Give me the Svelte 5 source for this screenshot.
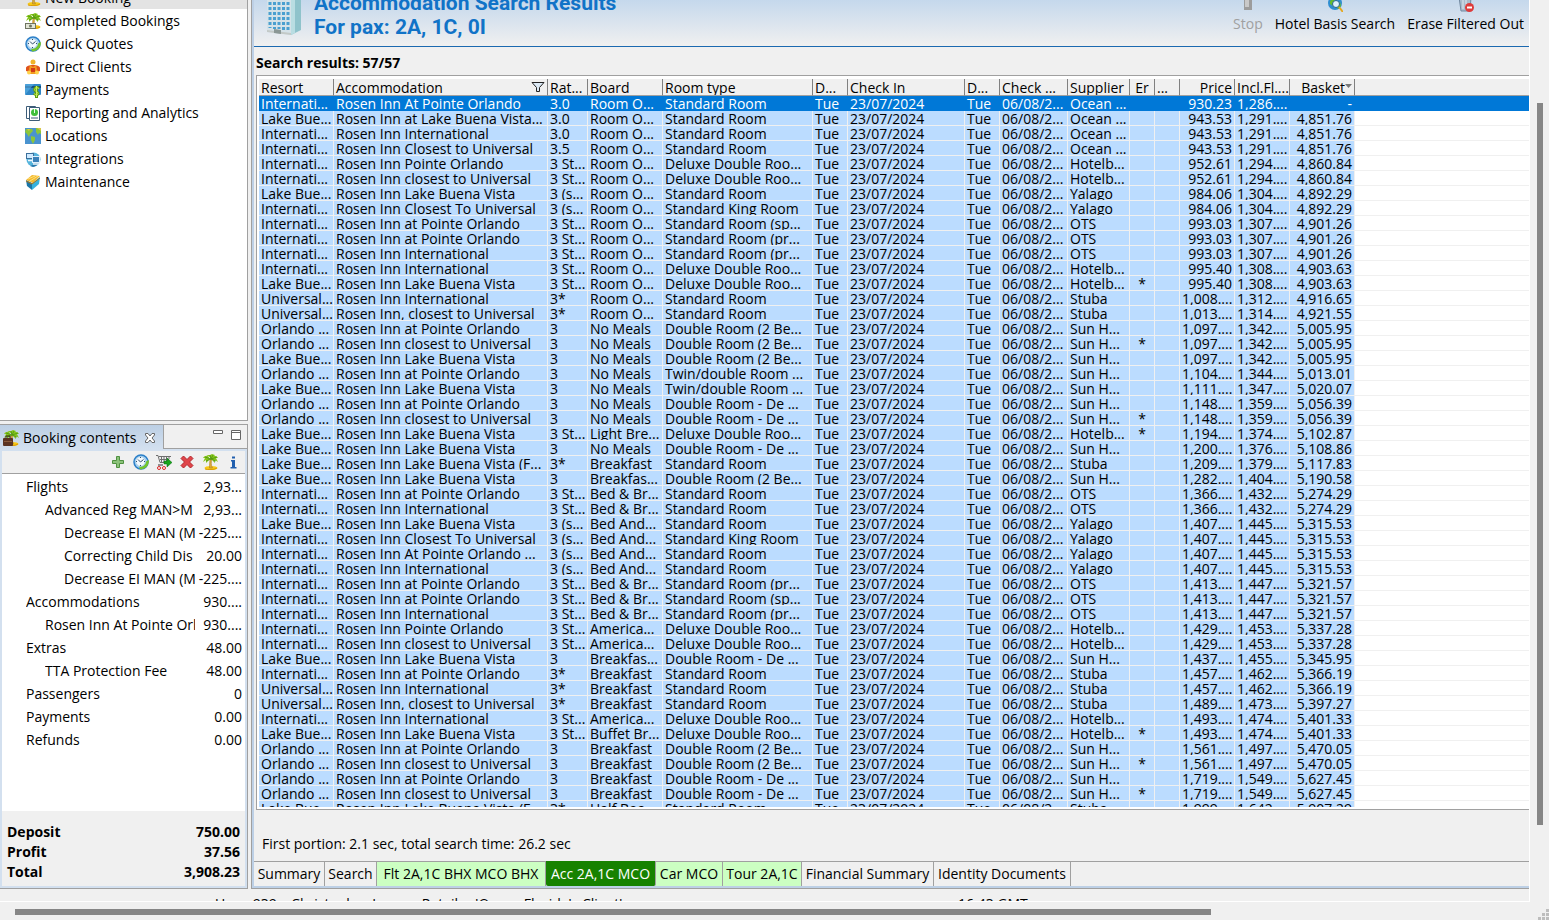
<script>
	const navItems = [
		{ label: 'Completed Bookings', icon: 'palmcash' },
		{ label: 'Quick Quotes', icon: 'clock' },
		{ label: 'Direct Clients', icon: 'client' },
		{ label: 'Payments', icon: 'payment' },
		{ label: 'Reporting and Analytics', icon: 'report' },
		{ label: 'Locations', icon: 'map' },
		{ label: 'Integrations', icon: 'network' },
		{ label: 'Maintenance', icon: 'tools' }
	];

	const tools = [
		{ label: 'Add', icon: 'plus' },
		{ label: 'Quick quote', icon: 'clock' },
		{ label: 'Checkout', icon: 'cart' },
		{ label: 'Remove', icon: 'cross' },
		{ label: 'Holiday', icon: 'palm' },
		{ label: 'Info', icon: 'info' }
	];

	const contents = [
		[0, 'Flights', '2,93...'],
		[1, 'Advanced Reg MAN>M', '2,93...'],
		[2, 'Decrease EI MAN (M', '-225....'],
		[2, 'Correcting Child Dis', '20.00'],
		[2, 'Decrease EI MAN (M', '-225....'],
		[0, 'Accommodations', '930....'],
		[1, 'Rosen Inn At Pointe Orl', '930....'],
		[0, 'Extras', '48.00'],
		[1, 'TTA Protection Fee', '48.00'],
		[0, 'Passengers', '0'],
		[0, 'Payments', '0.00'],
		[0, 'Refunds', '0.00']
	];

	const totals = [
		['Deposit', '750.00'],
		['Profit', '37.56'],
		['Total', '3,908.23']
	];

	const columns = [
		{ label: 'Resort', width: 75 },
		{ label: 'Accommodation', width: 214, filter: true },
		{ label: 'Rat...', width: 40 },
		{ label: 'Board', width: 75 },
		{ label: 'Room type', width: 150 },
		{ label: 'D...', width: 35 },
		{ label: 'Check In', width: 117 },
		{ label: 'D...', width: 35 },
		{ label: 'Check ...', width: 68 },
		{ label: 'Supplier', width: 62 },
		{ label: 'Er', width: 25, align: 'center' },
		{ label: '...', width: 25 },
		{ label: 'Price', width: 55, align: 'right' },
		{ label: 'Incl.Fl....', width: 55, align: 'right' },
		{ label: 'Basket', width: 65, align: 'right', sorted: true }
	];

	// resort | accommodation | rating | board | room | supplier | error | price | incl. flight | basket
	const data = `
Internati...|Rosen Inn At Pointe Orlando|3.0|Room O...|Standard Room|Ocean ...||930.23|1,286....|-
Lake Bue...|Rosen Inn at Lake Buena Vista...|3.0|Room O...|Standard Room|Ocean ...||943.53|1,291....|4,851.76
Internati...|Rosen Inn International|3.0|Room O...|Standard Room|Ocean ...||943.53|1,291....|4,851.76
Internati...|Rosen Inn Closest to Universal|3.5|Room O...|Standard Room|Ocean ...||943.53|1,291....|4,851.76
Internati...|Rosen Inn Pointe Orlando|3 St...|Room O...|Deluxe Double Roo...|Hotelb...||952.61|1,294....|4,860.84
Internati...|Rosen Inn closest to Universal|3 St...|Room O...|Deluxe Double Roo...|Hotelb...||952.61|1,294....|4,860.84
Lake Bue...|Rosen Inn Lake Buena Vista|3 (s...|Room O...|Standard Room|Yalago||984.06|1,304....|4,892.29
Internati...|Rosen Inn Closest To Universal|3 (s...|Room O...|Standard King Room|Yalago||984.06|1,304....|4,892.29
Internati...|Rosen Inn at Pointe Orlando|3 St...|Room O...|Standard Room (sp...|OTS||993.03|1,307....|4,901.26
Internati...|Rosen Inn at Pointe Orlando|3 St...|Room O...|Standard Room (pr...|OTS||993.03|1,307....|4,901.26
Internati...|Rosen Inn International|3 St...|Room O...|Standard Room (pr...|OTS||993.03|1,307....|4,901.26
Internati...|Rosen Inn International|3 St...|Room O...|Deluxe Double Roo...|Hotelb...||995.40|1,308....|4,903.63
Lake Bue...|Rosen Inn Lake Buena Vista|3 St...|Room O...|Deluxe Double Roo...|Hotelb...|*|995.40|1,308....|4,903.63
Universal...|Rosen Inn International|3*|Room O...|Standard Room|Stuba||1,008....|1,312....|4,916.65
Universal...|Rosen Inn, closest to Universal|3*|Room O...|Standard Room|Stuba||1,013....|1,314....|4,921.55
Orlando ...|Rosen Inn at Pointe Orlando|3|No Meals|Double Room (2 Be...|Sun H...||1,097....|1,342....|5,005.95
Orlando ...|Rosen Inn closest to Universal|3|No Meals|Double Room (2 Be...|Sun H...|*|1,097....|1,342....|5,005.95
Lake Bue...|Rosen Inn Lake Buena Vista|3|No Meals|Double Room (2 Be...|Sun H...||1,097....|1,342....|5,005.95
Orlando ...|Rosen Inn at Pointe Orlando|3|No Meals|Twin/double Room ...|Sun H...||1,104....|1,344....|5,013.01
Lake Bue...|Rosen Inn Lake Buena Vista|3|No Meals|Twin/double Room ...|Sun H...||1,111....|1,347....|5,020.07
Orlando ...|Rosen Inn at Pointe Orlando|3|No Meals|Double Room - De ...|Sun H...||1,148....|1,359....|5,056.39
Orlando ...|Rosen Inn closest to Universal|3|No Meals|Double Room - De ...|Sun H...|*|1,148....|1,359....|5,056.39
Lake Bue...|Rosen Inn Lake Buena Vista|3 St...|Light Bre...|Deluxe Double Roo...|Hotelb...|*|1,194....|1,374....|5,102.87
Lake Bue...|Rosen Inn Lake Buena Vista|3|No Meals|Double Room - De ...|Sun H...||1,200....|1,376....|5,108.86
Lake Bue...|Rosen Inn Lake Buena Vista (F...|3*|Breakfast|Standard Room|Stuba||1,209....|1,379....|5,117.83
Lake Bue...|Rosen Inn Lake Buena Vista|3|Breakfas...|Double Room (2 Be...|Sun H...||1,282....|1,404....|5,190.58
Internati...|Rosen Inn at Pointe Orlando|3 St...|Bed & Br...|Standard Room|OTS||1,366....|1,432....|5,274.29
Internati...|Rosen Inn International|3 St...|Bed & Br...|Standard Room|OTS||1,366....|1,432....|5,274.29
Lake Bue...|Rosen Inn Lake Buena Vista|3 (s...|Bed And...|Standard Room|Yalago||1,407....|1,445....|5,315.53
Internati...|Rosen Inn Closest To Universal|3 (s...|Bed And...|Standard King Room|Yalago||1,407....|1,445....|5,315.53
Internati...|Rosen Inn At Pointe Orlando ...|3 (s...|Bed And...|Standard Room|Yalago||1,407....|1,445....|5,315.53
Internati...|Rosen Inn International|3 (s...|Bed And...|Standard Room|Yalago||1,407....|1,445....|5,315.53
Internati...|Rosen Inn at Pointe Orlando|3 St...|Bed & Br...|Standard Room (pr...|OTS||1,413....|1,447....|5,321.57
Internati...|Rosen Inn at Pointe Orlando|3 St...|Bed & Br...|Standard Room (sp...|OTS||1,413....|1,447....|5,321.57
Internati...|Rosen Inn International|3 St...|Bed & Br...|Standard Room (pr...|OTS||1,413....|1,447....|5,321.57
Internati...|Rosen Inn Pointe Orlando|3 St...|America...|Deluxe Double Roo...|Hotelb...||1,429....|1,453....|5,337.28
Internati...|Rosen Inn closest to Universal|3 St...|America...|Deluxe Double Roo...|Hotelb...||1,429....|1,453....|5,337.28
Lake Bue...|Rosen Inn Lake Buena Vista|3|Breakfas...|Double Room - De ...|Sun H...||1,437....|1,455....|5,345.95
Internati...|Rosen Inn at Pointe Orlando|3*|Breakfast|Standard Room|Stuba||1,457....|1,462....|5,366.19
Universal...|Rosen Inn International|3*|Breakfast|Standard Room|Stuba||1,457....|1,462....|5,366.19
Universal...|Rosen Inn, closest to Universal|3*|Breakfast|Standard Room|Stuba||1,489....|1,473....|5,397.27
Internati...|Rosen Inn International|3 St...|America...|Deluxe Double Roo...|Hotelb...||1,493....|1,474....|5,401.33
Lake Bue...|Rosen Inn Lake Buena Vista|3 St...|Buffet Br...|Deluxe Double Roo...|Hotelb...|*|1,493....|1,474....|5,401.33
Orlando ...|Rosen Inn at Pointe Orlando|3|Breakfast|Double Room (2 Be...|Sun H...||1,561....|1,497....|5,470.05
Orlando ...|Rosen Inn closest to Universal|3|Breakfast|Double Room (2 Be...|Sun H...|*|1,561....|1,497....|5,470.05
Orlando ...|Rosen Inn at Pointe Orlando|3|Breakfast|Double Room - De ...|Sun H...||1,719....|1,549....|5,627.45
Orlando ...|Rosen Inn closest to Universal|3|Breakfast|Double Room - De ...|Sun H...|*|1,719....|1,549....|5,627.45
Lake Bue...|Rosen Inn Lake Buena Vista (F...|3*|Half Boa...|Standard Room|Stuba||1,999....|1,642....|5,907.29`;

	const rows = data
		.trim()
		.split('\n')
		.map((line) => {
			const c = line.split('|');
			return [...c.slice(0, 5), 'Tue', '23/07/2024', 'Tue', '06/08/2...', c[5], c[6], '', ...c.slice(7)];
		});

	const tabs = [
		{ label: 'Summary', width: 71 },
		{ label: 'Search', width: 52 },
		{ label: 'Flt 2A,1C BHX MCO BHX', width: 169, booked: true },
		{ label: 'Acc 2A,1C MCO', width: 110, booked: true },
		{ label: 'Car MCO', width: 67, booked: true },
		{ label: 'Tour 2A,1C', width: 79, booked: true },
		{ label: 'Financial Summary', width: 132 },
		{ label: 'Identity Documents', width: 137 }
	];

	let selectedRow = $state(0);
	let activeTab = $state('Acc 2A,1C MCO');
</script>

{#snippet icon(name)}
	<svg class="icon" viewBox="0 0 16 16" aria-hidden="true">
		{#if name === 'palm' || name === 'palmcash' || name === 'palmcase'}
			<ellipse cx="9" cy="14" rx="6.500" ry="2" fill="#f7c815" />
			<path d="M3 15c3 1 9 1 12-1" stroke="#d89a0c" fill="none" />
			<path d="M8 5h2c-1 3-1 6 .5 9H7.500c0-3 0-6 .5-9z" fill="#d9a93c" stroke="#a87a1e" stroke-width=".5" />
			<path d="M9 5C7 1 3 1 1 4l2 0-2 4 3-2 0 3 3-3 2-1zM9 5c1-4 5-4 7-1l-2 0 2 4-3-2 0 3-3-3zM8 5L5 1l3 0 2-1 3 1-3 4z" fill="#86c51c" />
			<path d="M9 5L3 3M9 5L4 7M9 5l6-2M9 5l5 2M9 5L8 1M9 5l2-4" stroke="#4c9410" stroke-width=".8" fill="none" />
			{#if name === 'palmcash'}
				<rect x=".5" y="10.500" width="10" height="5" fill="#e2e5d6" stroke="#6f7461" />
				<circle cx="5.500" cy="13" r="1.500" fill="#6f7461" />
			{/if}
			{#if name === 'palmcase'}
				<rect x="0" y="8" width="10" height="8" rx="1" fill="#5b3423" />
				<path d="M3 8V6h4v2" stroke="#33201a" fill="none" />
				<path d="M1 11.500h8" stroke="#8a5a3c" />
			{/if}
		{:else if name === 'clock'}
			<circle cx="8" cy="8" r="7" fill="#a9d3f2" stroke="#2b7fc8" stroke-width="1.500" />
			<path d="M16 6c0 6-4 9.500-9 9.500l-1-3c4 1 7-2 7-5z" fill="#74c52c" />
			<circle cx="7.500" cy="7.500" r="4.800" fill="#f4f9fd" stroke="#7fb2da" stroke-width=".5" />
			<path d="M7.500 8L5 5.500M7.500 8l3-2.500" stroke="#31506e" fill="none" />
			<path d="M7.500 3v1M7.500 11v1M3 7.500h1M11 7.500h1" stroke="#31506e" />
		{:else if name === 'client'}
			<circle cx="8" cy="3" r="2.500" fill="#f0b429" />
			<path d="M1 9c0-4 14-4 14 0v3l-3 1v2H4v-2l-3-1z" fill="#e0531c" />
			<path d="M5 6l3 2 3-2 1 4-1 5H5L4 10z" fill="#f29a1f" />
			<circle cx="4" cy="13.500" r="2" fill="#ffd24a" /><circle cx="12" cy="13.500" r="2" fill="#ffd24a" />
			<path d="M6 9h4v4H6z" fill="#d23a17" />
		{:else if name === 'payment'}
			<rect x="0" y="2" width="16" height="11" rx="1" fill="#2f86c6" />
			<path d="M0 4h16v2H0z" fill="#174f80" />
			<path d="M0 13L9 2H1L0 3z" fill="#5eb2e6" opacity=".6" />
			<path d="M14 6.500c-3-2-5 0-4 2s3 1 3 3-3 1-4 0M11.500 4v12" stroke="#5c9c10" stroke-width="3" fill="none" />
			<path d="M14 6.500c-3-2-5 0-4 2s3 1 3 3-3 1-4 0M11.500 4v11" stroke="#c9ee5a" fill="none" />
		{:else if name === 'report'}
			<path d="M1.500 1.500h9v12h-9z" fill="#fff" stroke="#3c5c78" />
			<path d="M4.500 2.500h10v13h-10z" fill="#fff" stroke="#3c5c78" />
			<circle cx="9.500" cy="7.500" r="3.500" fill="#3fbf3a" />
			<path d="M9.500 4v4" stroke="#eaffea" />
			<path d="M6 13h7" stroke="#3c5c78" />
		{:else if name === 'map'}
			<rect width="16" height="16" fill="#4a93cf" />
			<path d="M1 1h6l1 2-3 3-1 3-2-3-2-2zM6 8l4 1v3l-2 4-2-4zM11 0h5v6l-2-1-1 2-2-3z" fill="#8cc63a" />
			<path d="M2 1h3L4 3zM12 0h4v3z" fill="#d9c64a" />
		{:else if name === 'network'}
			<circle cx="8.500" cy="8.500" r="7" fill="#55b4dc" />
			<path d="M5 15c4-1 6-4 7-8l3 1c0 4-4 8-7 8z" fill="#2878ac" />
			<rect x="1.500" y="2.500" width="7" height="5" fill="#cfeaff" stroke="#3c6f9b" />
			<rect x="7.500" y="5.500" width="7" height="6" fill="#3a80b8" stroke="#e0f0fa" />
			<path d="M3 9.500h4M8 13h6" stroke="#f2f8fc" stroke-width="1.500" />
		{:else if name === 'tools'}
			<path d="M1 6l6 3v7l-5-4z" fill="#1a76a8" />
			<path d="M7 9l8-6-1 7-7 6z" fill="#36b1dd" />
			<path d="M1 6l6-5 8 1-7 7z" fill="#f5b82e" />
			<path d="M3 5l7-3M5 7l8-5" stroke="#fbe27a" />
			<path d="M1 7l6 3 8-6" stroke="#a8751d" fill="none" />
		{:else if name === 'plus'}
			<path d="M6.500 2.500h3v4h4v3h-4v4h-3v-4h-4v-3h4z" fill="#8cc27a" stroke="#4f9140" />
		{:else if name === 'cart'}
			<path d="M0 1.500h2l2 7h8M3 2.500h12M4 5.500h9M5.500 2v6M8 2v6M10.500 2v6M13 2v3" stroke="#6e6e6e" fill="none" />
			<circle cx="3" cy="14" r="1.500" fill="#fff" stroke="#d22" /><circle cx="8" cy="14" r="1.500" fill="#fff" stroke="#d22" />
			<path d="M2 11h5" stroke="#333" />
			<path d="M8 7h3V4l5 4.500-5 4.500v-3H8z" fill="#18a51c" stroke="#0b6a12" stroke-width=".5" />
		{:else if name === 'cross'}
			<path d="M4.500 2L8 5.500 11.500 2 14 4.500 10.500 8 14 11.500 11.500 14 8 10.500 4.500 14 2 11.500 5.500 8 2 4.500z" fill="#e0454a" stroke="#b3262b" stroke-linejoin="round" />
		{:else if name === 'info'}
			<path d="M6 6h4v7h1.500v1.500h-6V13H7V7.500H6zM7 2.500h3v2H7z" fill="#215fae" />
		{:else if name === 'globe'}
			<circle cx="8" cy="7" r="7" fill="#2f8ed0" />
			<path d="M3 5l4-3 1 3-2 5-3-2zM9 10l4-4 1 4-3 3z" fill="#63bd2e" />
			<circle cx="9" cy="8" r="3.500" fill="#dff2fb" stroke="#27638f" />
			<path d="M12 11l4 5" stroke="#e5a71c" stroke-width="2" />
		{:else if name === 'bin'}
			<path d="M1 1h12l-1 14H3z" fill="#a9bccd" stroke="#7289a0" />
			<path d="M5 3v10M8 3v10" stroke="#dfe8f0" />
			<circle cx="11.500" cy="11.500" r="4.500" fill="#dd3b3b" />
			<path d="M9 11.500h5" stroke="#fff" stroke-width="2" />
		{:else if name === 'stop'}
			<rect x="4" y="3" width="8" height="11" fill="#9c9c9c" />
			<rect x="5" y="4" width="4" height="7" fill="#c9c9c9" />
		{/if}
	</svg>
{/snippet}

<div class="window">
	<div class="workspace">
		<aside>
			<nav>
				<a href="#new" class="selected">{@render icon('palm')}New Booking</a>
				{#each navItems as item}
					<a href="#{item.icon}">{@render icon(item.icon)}{item.label}</a>
				{/each}
			</nav>

			<section class="booking">
				<div class="strip">
					<h2>
						{@render icon('palmcase')}
						Booking contents
						<button class="close" aria-label="Close">
							<svg viewBox="0 0 12 12"><path d="M1.500 1.500h2.500L6 4l2-2.500h2.500V3L8 6l2.500 3v1.500H8L6 8l-2 2.500H1.500V9L4 6 1.500 3z" fill="#fff" stroke="#666" /></svg>
						</button>
					</h2>
					<div class="window-buttons">
						<button aria-label="Minimize"><svg viewBox="0 0 12 12"><path d="M1.500 1.500h9v3h-9z" fill="#fff" stroke="#666" /></svg></button>
						<button aria-label="Maximize"><svg viewBox="0 0 12 12"><path d="M1.500 1.500h9v9h-9zM1.500 3.500h9" fill="#fff" stroke="#666" /></svg></button>
					</div>
				</div>
				<div class="frame">
					<div class="toolbar">
						{#each tools as tool}
							<button aria-label={tool.label}>{@render icon(tool.icon)}</button>
						{/each}
					</div>
					<ul class="tree">
						{#each contents as [level, name, value]}
							<li>
								<span class="name level-{level}">{name}</span>
								<span class="value">{value}</span>
							</li>
						{/each}
					</ul>
					<dl>
						{#each totals as [name, value]}
							<dt>{name}</dt>
							<dd>{value}</dd>
						{/each}
					</dl>
				</div>
			</section>
		</aside>

		<main>
			<header>
				<svg class="building" viewBox="0 0 36 48" aria-hidden="true">
					<path d="M1 0h24v48L1 45z" fill="#d5e2e8" />
					<path d="M25 0h10v43l-10 5z" fill="#8fc3cb" />
					<path d="M25 0h4v46l-4 2z" fill="#b9dde2" />
					<path d="M4 0v41M8.500 0v42M13 0v42M17.500 0v43M22 0v43" stroke="#4a9fd0" stroke-width="3" stroke-dasharray="3 2" />
					<path d="M1 43l24 3v2L1 45z" fill="#c3c9c7" />
					<path d="M8 42l7 1v4l-7-1z" fill="#8a9795" />
				</svg>
				<h1>Accommodation Search Results<br />For pax: 2A, 1C, 0I</h1>
				<div class="actions">
					<button disabled>{@render icon('stop')}Stop</button>
					<button>{@render icon('globe')}Hotel Basis Search</button>
					<button>{@render icon('bin')}Erase Filtered Out</button>
				</div>
			</header>

			<p class="count">Search results: 57/57</p>

			<div class="results">
				<div class="rows">
					<table>
						<colgroup>
							{#each columns as column}
								<col style="width: {column.width}px" />
							{/each}
							<col />
						</colgroup>
						<thead>
							<tr>
								{#each columns as column}
									<th class={column.align}>
										{#if column.filter}
											<svg class="funnel" viewBox="0 0 14 12" aria-label="Filtered"><path d="M1 1.500h12L8.500 6.500v4h-3v-4z" fill="#dce9f5" stroke="#222" /></svg>
										{/if}{column.label}{#if column.sorted}<svg class="arrow" viewBox="0 0 7 4" aria-hidden="true"><path d="M0 0h7L3.500 4z" fill="#777" /></svg>{/if}
									</th>
								{/each}
								<th class="rest"></th>
							</tr>
						</thead>
						<tbody>
							{#each rows as row, i}
								<tr class:selected={selectedRow === i} onclick={() => (selectedRow = i)}>
									{#each row as cell, j}
										<td class={columns[j].align}>{cell}</td>
									{/each}
									<td class="rest"></td>
								</tr>
							{/each}
						</tbody>
					</table>
				</div>
			</div>

			<p class="timing">First portion: 2.1 sec, total search time: 26.2 sec</p>

			<div class="tabs">
				{#each tabs as tab}
					<button
						class:booked={tab.booked}
						class:active={activeTab === tab.label}
						style="min-width: {tab.width}px"
						onclick={() => (activeTab = tab.label)}
					>
						{tab.label}
					</button>
				{/each}
			</div>
		</main>
	</div>

	<footer>
		<span>User: 939 – Christopher Jones – Retailer 'Ocean Florida's Client'</span>
		<span>16:43 GMT</span>
	</footer>

	<div class="scroll vertical"><div class="thumb"></div></div>
	<div class="scroll horizontal"><div class="thumb"></div></div>
	<svg class="grip" viewBox="0 0 12 12" aria-hidden="true">
		<path d="M9 1h3v3H9zM5 5h3v3H5zM9 5h3v3H9zM1 9h3v3H1zM5 9h3v3H5zM9 9h3v3H9z" fill="#bdbdbd" />
	</svg>
</div>

<style>
	:global(body) {
		background: #f0f0f0;
		overflow: hidden;
	}

	.window {
		display: grid;
		grid-template-columns: minmax(0, 1fr) 20px;
		grid-template-rows: minmax(0, 1fr) 13px 18px;
		height: 100vh;
		background: #f0f0f0;
		color: #000;
		font-family: 'Open Sans', 'Noto Sans', sans-serif;
		font-size: 14px;
		line-height: 20px;
	}

	h1, h2, p, ul, dl, dd {
		margin: 0;
		padding: 0;
	}

	button {
		border: none;
		background: none;
		padding: 0;
		font: inherit;
		color: inherit;
	}

	svg {
		display: block;
		flex: none;
	}

	.icon {
		width: 16px;
		height: 16px;
	}

	.workspace {
		display: grid;
		grid-template-columns: 248px minmax(0, 1fr);
		gap: 3px;
		min-height: 0;
	}

	aside {
		display: flex;
		flex-direction: column;
		gap: 3px;
		min-height: 0;
	}

	nav {
		flex: 10 1 0;
		min-height: 0;
		box-sizing: border-box;
		overflow: hidden;
		background: #fff;
		border: solid #a0a0a0;
		border-width: 0 1px 1px 0;
	}

	nav a {
		display: flex;
		align-items: center;
		gap: 4px;
		height: 23px;
		padding-left: 25px;
		color: #000;
		text-decoration: none;
	}

	/* list is scrolled a little past its first entry */
	nav a.selected {
		margin-top: -14px;
		background: #e3e3e3;
	}

	.booking {
		flex: 11 1 0;
		min-height: 0;
		box-sizing: border-box;
		display: flex;
		flex-direction: column;
		border: solid #a0a0a0;
		border-width: 1px 1px 1px 0;
	}

	.strip {
		display: flex;
		height: 24px;
	}

	h2 {
		display: flex;
		align-items: center;
		gap: 4px;
		padding: 1px 7px 0 3px;
		font-size: 14px;
		font-weight: 400;
		background: linear-gradient(#bccfe4, #d3e0ef);
		border-right: 1px solid #a0a0a0;
	}

	.close {
		margin-left: 4px;
	}

	.close svg,
	.window-buttons svg {
		width: 12px;
		height: 12px;
	}

	.window-buttons {
		flex: 1;
		display: flex;
		justify-content: flex-end;
		gap: 6px;
		padding: 4px 5px 0 0;
		border-bottom: 1px solid #a0a0a0;
		align-items: flex-start;
	}

	.frame {
		flex: 1;
		min-height: 0;
		display: flex;
		flex-direction: column;
		border: 2px solid #d3e0ef;
	}

	.toolbar {
		display: flex;
		justify-content: flex-end;
		align-items: center;
		gap: 7px;
		height: 22px;
		padding-right: 4px;
		border-bottom: 1px solid #a0a0a0;
	}

	.tree {
		flex: 1;
		min-height: 0;
		overflow: hidden;
		list-style: none;
		padding-top: 1px;
		background: #fff;
	}

	.tree li {
		display: grid;
		grid-template-columns: minmax(0, 1fr) 50px;
		line-height: 23px;
		white-space: nowrap;
	}

	.name {
		overflow: hidden;
		margin-left: 24px;
	}

	.level-1 {
		margin-left: 43px;
	}

	.level-2 {
		margin-left: 62px;
	}

	.value {
		padding-right: 3px;
		text-align: right;
	}

	dl {
		display: grid;
		grid-template-columns: 1fr auto;
		padding: 11px 5px 4px;
		font-weight: 700;
	}

	dd {
		text-align: right;
	}

	main {
		display: flex;
		flex-direction: column;
		min-width: 0;
		min-height: 0;
		border-left: 1px solid #a0a0a0;
		border-bottom: 1px solid #a0a0a0;
		box-shadow: inset 2px -2px #bdd0e6;
		padding: 0 0 2px 2px;
	}

	header {
		display: flex;
		height: 46px;
		flex: none;
		overflow: hidden;
		background: linear-gradient(#c5d8ec, #f0f0f0);
		border-bottom: 1px solid #1b69b0;
	}

	.building {
		width: 36px;
		height: 48px;
		margin: -13px 12px 0 12px;
	}

	h1 {
		flex: 1;
		margin-top: -9px;
		font-family: Roboto, sans-serif;
		font-size: 21px;
		line-height: 24px;
		font-weight: 700;
		color: #1173c7;
	}

	.actions {
		display: flex;
		align-items: flex-start;
		gap: 12px;
		margin: -4px 5px 0 0;
		white-space: nowrap;
	}

	.actions button {
		display: flex;
		flex-direction: column;
		align-items: center;
		gap: 2px;
	}

	.actions button:disabled {
		color: #a0a0a0;
	}

	.count {
		padding: 6px 2px 2px;
		font-weight: 700;
	}

	.results {
		flex: 1;
		min-height: 0;
		display: flex;
		margin-left: 2px;
		padding: 3px 0 2px 2px;
		background: #fff;
		border: solid #a0a0a0;
		border-width: 1px 0 1px 1px;
	}

	.rows {
		flex: 1;
		min-width: 0;
		overflow: hidden;
	}

	table {
		table-layout: fixed;
		width: 100%;
		border-collapse: separate;
		border-spacing: 0;
	}

	th,
	td {
		padding: 2px 2px 0;
		overflow: hidden;
		white-space: nowrap;
		text-align: left;
		font-weight: 400;
	}

	th {
		height: 14px;
		line-height: 14px;
		background: #f0f0f0;
		border-right: 1px solid #808080;
		border-bottom: 1px solid #a0a0a0;
	}

	td {
		height: 12px;
		line-height: 12px;
		background: #bbdcff;
		border-right: 1px solid #f0f0f0;
		border-bottom: 1px solid #f0f0f0;
	}

	.center {
		text-align: center;
	}

	.right {
		text-align: right;
	}

	.rest {
		border-right: none;
	}

	td.rest {
		background: #fff;
	}

	tr.selected td {
		background: #0078d7;
		border-color: #0078d7;
		color: #fff;
	}

	.funnel {
		float: right;
		width: 14px;
		height: 12px;
	}

	.arrow {
		display: inline-block;
		width: 7px;
		height: 4px;
		vertical-align: 5px;
	}

	.timing {
		padding: 24px 8px 7px;
	}

	.tabs {
		display: flex;
		height: 24px;
		border-top: 1px solid #a0a0a0;
	}

	.tabs button {
		box-sizing: border-box;
		padding: 0 2px;
		white-space: nowrap;
		border-right: 1px solid #a0a0a0;
	}

	.tabs .booked {
		background: #ccffc2;
	}

	.tabs .active {
		margin-top: -1px;
		background: #178200;
		color: #fff;
		border-radius: 0 0 2px 2px;
	}

	footer {
		grid-row: 2;
		overflow: hidden;
		display: grid;
		grid-template-columns: 958px 1fr;
		padding-top: 5px;
		border-bottom: 1px solid #fff;
		box-sizing: border-box;
	}

	footer span:first-child {
		padding-left: 215px;
	}

	.scroll {
		display: flex;
	}

	.vertical {
		grid-column: 2;
		grid-row: 1 / 3;
		border-left: 1px solid #fff;
		flex-direction: column;
		padding-left: 7px;
	}

	.vertical .thumb {
		width: 6px;
		height: 80%;
		margin-top: 103px;
		background: #868686;
	}

	.horizontal {
		grid-row: 3;
		padding: 7px 0 0 15px;
	}

	.horizontal .thumb {
		width: 79%;
		height: 6px;
		background: #868686;
	}

	.grip {
		grid-row: 3;
		grid-column: 2;
		width: 12px;
		height: 12px;
		align-self: end;
		justify-self: end;
	}
</style>
